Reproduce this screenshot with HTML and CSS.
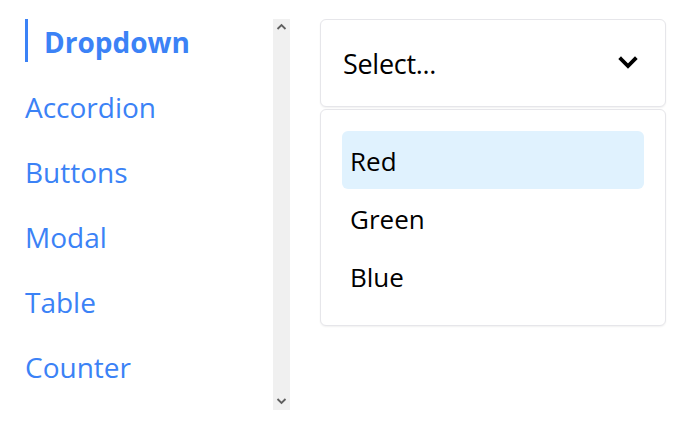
FILE: index.html
```html
<!DOCTYPE html>
<html lang="en">
<head>
<meta charset="utf-8">
<title>Components</title>
<link rel="stylesheet" href="styles.css">
</head>
<body>
<div class="app">
  <aside class="sidebar">
    <nav class="nav">
      <a class="nav-item active" href="#">Dropdown</a>
      <a class="nav-item" href="#">Accordion</a>
      <a class="nav-item" href="#">Buttons</a>
      <a class="nav-item" href="#">Modal</a>
      <a class="nav-item" href="#">Table</a>
      <a class="nav-item" href="#">Counter</a>
    </nav>
    <div class="scrollbar" aria-hidden="true">
      <svg class="scroll-btn" width="17" height="17" viewBox="0 0 17 17"><path d="M4.5 10 L8.5 6 L12.5 10" fill="none" stroke="#606060" stroke-width="1.8"/></svg>
      <svg class="scroll-btn" width="17" height="17" viewBox="0 0 17 17"><path d="M4.5 6 L8.5 10 L12.5 6" fill="none" stroke="#606060" stroke-width="1.8"/></svg>
    </div>
  </aside>
  <main class="main">
    <div class="dropdown">
      <button class="trigger" type="button">
        <span class="trigger-label">Select...</span>
        <svg class="chevron" width="20" height="13" viewBox="0 0 20 13" aria-hidden="true">
          <path d="M3 3 L10 10 L17 3" fill="none" stroke="#000" stroke-width="3.8" stroke-linecap="square"/>
        </svg>
      </button>
      <ul class="menu">
        <li class="option highlighted">Red</li>
        <li class="option">Green</li>
        <li class="option">Blue</li>
      </ul>
    </div>
  </main>
</div>
</body>
</html>
```
FILE: styles.css
```css
html, body {
  margin: 0;
  padding: 0;
  background: #fff;
}
body {
  font-family: "Open Sans", "Noto Sans", sans-serif;
}
.app {
  display: flex;
  align-items: flex-start;
  padding: 19px 0 0 8px;
  gap: 30px;
}
.sidebar {
  width: 282px;
  height: 391px;
  display: flex;
}
.nav {
  flex: 1;
  padding-left: 17px;
  display: flex;
  flex-direction: column;
  gap: 22px;
  overflow: hidden;
}
.scrollbar {
  width: 17px;
  background: #f0f0f0;
  display: flex;
  flex-direction: column;
  justify-content: space-between;
}
.scroll-btn {
  display: block;
}
.nav-item {
  display: flex;
  align-items: center;
  box-sizing: border-box;
  height: 43px;
  padding-top: 3px;
  flex: none;
  font-size: 28px;
  color: #3b82f6;
  text-decoration: none;
}
.nav-item.active {
  border-left: 3px solid #3b82f6;
  padding-left: 16px;
  font-weight: 700;
}
.main {
  width: 346px;
}
.dropdown {
  display: flex;
  flex-direction: column;
  gap: 2px;
}
.trigger {
  display: flex;
  align-items: center;
  justify-content: space-between;
  height: 88px;
  box-sizing: border-box;
  padding: 0 27px 0 22px;
  background: #fff;
  border: 1px solid #e6e6ea;
  border-radius: 6px;
  box-shadow: 0 1px 2px rgba(0, 0, 0, 0.06);
  font-family: inherit;
  font-size: 27px;
  letter-spacing: -0.3px;
  color: #000;
  text-align: left;
}
.chevron {
  display: block;
  margin-top: -2px;
}
.menu {
  list-style: none;
  margin: 0;
  padding: 21px 21px 20px;
  background: #fff;
  border: 1px solid #e6e6ea;
  border-radius: 6px;
  box-shadow: 0 1px 2px rgba(0, 0, 0, 0.06);
}
.option {
  display: flex;
  align-items: center;
  box-sizing: border-box;
  height: 58px;
  padding: 2px 0 0 8px;
  border-radius: 6px;
  font-size: 26px;
  color: #000;
}
.option.highlighted {
  background: #e0f2fe;
}
```
